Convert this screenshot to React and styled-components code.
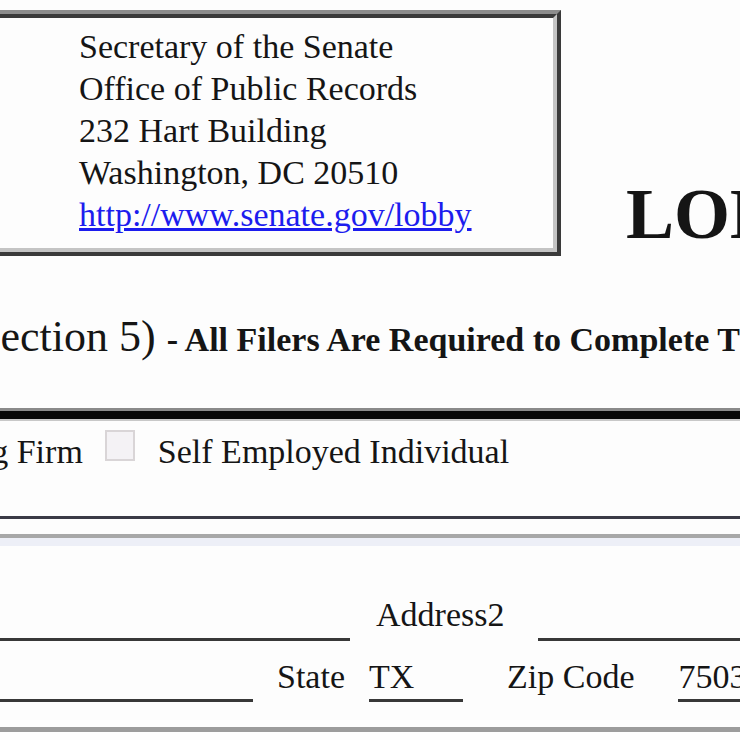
import React from 'react';
import styled, { createGlobalStyle } from 'styled-components';

const GlobalStyle = createGlobalStyle`
  html, body {
    margin: 0;
    padding: 0;
    background: #fdfdfd;
  }
  body {
    font-family: "Liberation Serif", "Times New Roman", serif;
    color: #151515;
  }
`;

const Page = styled.div`
  width: 740px;
  height: 740px;
  overflow: hidden;
`;

const Header = styled.div`
  display: flex;
  align-items: flex-end;
  padding-top: 10px;
`;

const AddressBox = styled.div`
  flex: 0 0 601px;
  box-sizing: border-box;
  margin-left: -40px;
  border: 4px solid;
  border-color: #8c8c8c #3a3a3a #3a3a3a #8c8c8c;
`;

const AddressInner = styled.div`
  border: 4px solid;
  border-color: #3a3a3a #c4c4c4 #c4c4c4 #3a3a3a;
  padding: 7.5px 0 12.5px 111px;
  font-size: 34px;
  line-height: 42px;
  white-space: nowrap;
`;

const Link = styled.a`
  color: #1c1cee;
  text-decoration: underline;
`;

const Title = styled.h1`
  margin: 0 0 6px 65px;
  font-size: 72px;
  line-height: 72px;
  font-weight: bold;
  white-space: nowrap;
`;

const Heading = styled.div`
  margin: 55px 0 0 -24px;
  font-size: 44px;
  line-height: 52px;
  white-space: nowrap;
`;

const Note = styled.span`
  font-size: 34px;
  font-weight: bold;
`;

const HeavyRule = styled.div`
  margin-top: 42px;
  height: 8px;
  background: #060606;
  border-top: 3px solid #8a8a8a;
  border-bottom: 2px solid #c8c8c8;
`;

const TypeRow = styled.div`
  display: flex;
  align-items: flex-start;
  margin-left: -124px;
  padding: 9.5px 0 43.5px;
  border-bottom: 3px solid #3a3a46;
  font-size: 34px;
  line-height: 42px;
  white-space: nowrap;
`;

const Checkbox = styled.span`
  flex: none;
  width: 26px;
  height: 27px;
  margin: -1px 23px 0 22px;
  border: 2px solid #d9d5d7;
  background: #f4f2f5;
`;

const Panel = styled.div`
  margin-top: 15px;
  padding: 56px 0 24.5px;
  border-top: 4px solid #a8a8a8;
  border-bottom: 5px solid #9c9c9c;
  background: linear-gradient(#edeff7 0, #edeff7 8px, transparent 8px);
  font-size: 34px;
  line-height: 42px;
`;

const FieldRow = styled.div`
  display: flex;
  align-items: baseline;
  white-space: nowrap;

  & + & {
    margin-top: 15px;
  }
`;

const Field = styled.div`
  flex: ${(p) => (p.$grow ? '1 0 auto' : 'none')};
  width: ${(p) => (p.$width ? `${p.$width}px` : 'auto')};
  padding-bottom: 1.5px;
  border-bottom: 3px solid #383838;
`;

const Label = styled.span`
  margin: 0 ${(p) => p.$right}px 0 ${(p) => p.$left}px;
`;

const App = () => (
  <Page>
    <GlobalStyle />
    <Header>
      <AddressBox>
        <AddressInner>
          <div>Secretary of the Senate</div>
          <div>Office of Public Records</div>
          <div>232 Hart Building</div>
          <div>Washington, DC 20510</div>
          <div>
            <Link href="#lobby">http://www.senate.gov/lobby</Link>
          </div>
        </AddressInner>
      </AddressBox>
      <Title>LOBBYING REGISTRATION</Title>
    </Header>

    <Heading>
      Section 5) <Note>- All Filers Are Required to Complete This Page</Note>
    </Heading>

    <HeavyRule />

    <TypeRow>
      <span>Lobbying Firm</span>
      <Checkbox />
      <span>Self Employed Individual</span>
    </TypeRow>

    <Panel>
      <FieldRow>
        <Field $width={350}>&nbsp;</Field>
        <Label $left={26} $right={34}>Address2</Label>
        <Field $grow>&nbsp;</Field>
      </FieldRow>
      <FieldRow>
        <Field $width={253}>&nbsp;</Field>
        <Label $left={24} $right={24}>State</Label>
        <Field $width={94}>TX</Field>
        <Label $left={44} $right={44}>Zip Code</Label>
        <Field $grow>75039</Field>
      </FieldRow>
    </Panel>
  </Page>
);

export default App;
